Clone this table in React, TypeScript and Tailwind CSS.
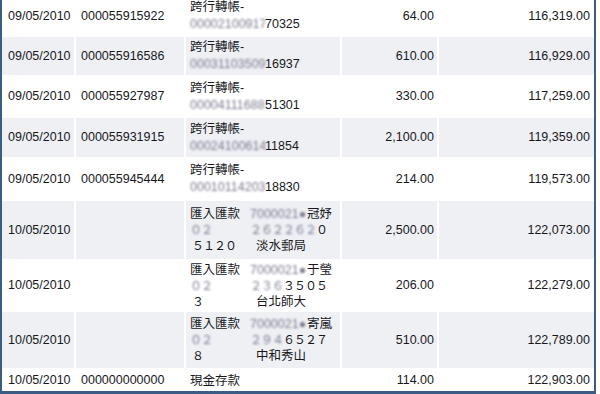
import type { ReactNode } from 'react';

const cols = 'grid grid-cols-[72px_108px_154px_95px_155px] gap-x-[2px]';

function Blur({ children, className = '' }: { children: ReactNode; className?: string }) {
  return (
    <span className={`inline-block shrink-0 overflow-hidden whitespace-nowrap text-[#7d7d92] blur-[1.2px] ${className}`}>
      {children}
    </span>
  );
}

function Transfer({ hidden, tail }: { hidden: string; tail: string }) {
  return (
    <div className="leading-[17px]">
      <div>跨行轉帳-</div>
      <div className="flex whitespace-nowrap">
        <Blur className="w-[75px]">{hidden}</Blur>
        <span>{tail}</span>
      </div>
    </div>
  );
}

function Remit({ name, mid, midTail, last, place }: { name: string; mid: string; midTail: string; last: string; place: string }) {
  return (
    <div className="leading-[16px] whitespace-nowrap">
      <div className="flex">
        <span className="w-[60px] shrink-0">匯入匯款</span>
        <Blur className="w-[57px]">7000021●</Blur>
        <span>{name}</span>
      </div>
      <div className="flex text-[12px] tracking-[-1px]">
        <Blur className="w-[60px]">０２</Blur>
        <Blur>{mid}</Blur>
        <span>{midTail}</span>
      </div>
      <div className="flex">
        <span className="w-[66px] shrink-0 pl-[2px] text-[12px] tracking-[-1px]">{last}</span>
        <span>{place}</span>
      </div>
    </div>
  );
}

const rows = [
  { date: '09/05/2010', ref: '000055915922', desc: <Transfer hidden="00002100917" tail="70325" />, amt: '64.00', bal: '116,319.00', h: 'h-[38px]' },
  { date: '09/05/2010', ref: '000055916586', desc: <Transfer hidden="00031103509" tail="16937" />, amt: '610.00', bal: '116,929.00', h: 'h-[38px]' },
  { date: '09/05/2010', ref: '000055927987', desc: <Transfer hidden="00004111688" tail="51301" />, amt: '330.00', bal: '117,259.00', h: 'h-[39px]' },
  { date: '09/05/2010', ref: '000055931915', desc: <Transfer hidden="00024100614" tail="11854" />, amt: '2,100.00', bal: '119,359.00', h: 'h-[39px]' },
  { date: '09/05/2010', ref: '000055945444', desc: <Transfer hidden="00010114203" tail="18830" />, amt: '214.00', bal: '119,573.00', h: 'h-[40px]' },
  { date: '10/05/2010', ref: '', desc: <Remit name="冠妤" mid="２６２２６２" midTail="０" last="５１２０" place="淡水郵局" />, amt: '2,500.00', bal: '122,073.00', h: 'h-[58px]' },
  { date: '10/05/2010', ref: '', desc: <Remit name="于瑩" mid="２３６" midTail="３５０５" last="３" place="台北師大" />, amt: '206.00', bal: '122,279.00', h: 'h-[49px]' },
  { date: '10/05/2010', ref: '', desc: <Remit name="寄嵐" mid="２９４" midTail="６５２７" last="８" place="中和秀山" />, amt: '510.00', bal: '122,789.00', h: 'h-[56px]' },
  { date: '10/05/2010', ref: '000000000000', desc: <div className="leading-[16px]">現金存款</div>, amt: '114.00', bal: '122,903.00', h: 'h-[21px]' },
];

export default function App() {
  return (
    <div className="h-[394px] w-[600px] overflow-hidden bg-white">
      <div
        className="-mt-[3px] flex w-[596px] flex-col gap-y-[2px] border-x-2 border-b-[3px] border-[#3b5c85] bg-white text-[12.5px] text-[#18181c]"
        style={{ fontFamily: '"Liberation Sans", "Noto Sans CJK TC", sans-serif' }}
      >
        {rows.map((r, i) => {
          const bg = i % 2 === 1 ? 'bg-[#eef0f4]' : 'bg-white';
          return (
            <div key={i} className={`${cols} ${r.h}`}>
              <div className={`${bg} flex items-center pl-[6px]`}>{r.date}</div>
              <div className={`${bg} flex items-center pl-[5px]`}>{r.ref}</div>
              <div className={`${bg} flex items-center overflow-hidden pl-[4px]`}>{r.desc}</div>
              <div className={`${bg} flex items-center justify-end pr-[3px]`}>{r.amt}</div>
              <div className={`${bg} flex items-center justify-end pr-[4px]`}>{r.bal}</div>
            </div>
          );
        })}
      </div>
    </div>
  );
}
